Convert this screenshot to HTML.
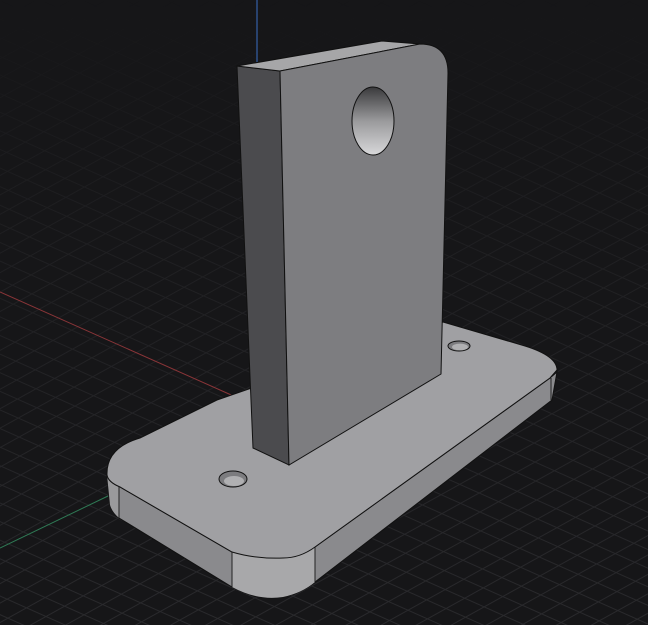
<!DOCTYPE html>
<html><head><style>html,body{margin:0;padding:0;background:#161618;overflow:hidden}svg{display:block}</style></head>
<body>
<svg width="648" height="625" viewBox="0 0 648 625" xmlns="http://www.w3.org/2000/svg">
<defs>
<pattern id="p1" width="40" height="17" patternUnits="userSpaceOnUse" patternTransform="rotate(24)"><line x1="0" y1="0.5" x2="40" y2="0.5" stroke="#2a2a2d" stroke-width="1"/></pattern>
<pattern id="p2" width="40" height="17" patternUnits="userSpaceOnUse" patternTransform="rotate(-29)"><line x1="0" y1="0.5" x2="40" y2="0.5" stroke="#2a2a2d" stroke-width="1"/></pattern>
<linearGradient id="fade" x1="0" y1="0" x2="0" y2="1"><stop offset="0" stop-color="#fff" stop-opacity="0"/><stop offset="0.3" stop-color="#fff" stop-opacity="0.4"/><stop offset="1" stop-color="#fff" stop-opacity="1"/></linearGradient>
<mask id="m"><rect width="648" height="625" fill="url(#fade)"/></mask>
<linearGradient id="hole" x1="0" y1="0" x2="0" y2="1"><stop offset="0" stop-color="#3a3a3c"/><stop offset="0.5" stop-color="#9a9a9c"/><stop offset="1" stop-color="#d8d8da"/></linearGradient>
</defs>
<rect width="648" height="625" fill="#161618"/>
<g mask="url(#m)"><rect width="648" height="625" fill="url(#p1)"/><rect width="648" height="625" fill="url(#p2)"/></g>
<line x1="257" y1="0" x2="257" y2="62" stroke="#3a6fc4" stroke-width="1"/>
<line x1="0" y1="292" x2="238" y2="398" stroke="#8a3538" stroke-width="1"/>
<line x1="0" y1="548" x2="108" y2="496" stroke="#2f7a55" stroke-width="1"/>
<!-- base side -->
<path d="M107,475 L110,505 Q112,512 119,518 L232,587 Q258,601 283,597 Q302,593 315,582 L552,400 L557,372 L550,378 L315,547 Q300,558 283,558 Q255,559 232,552 L120,487 Q108,482 107,475 Z" fill="#8a8a8d" stroke="#111" stroke-width="1"/>
<path d="M107,475 Q108,482 119,487 L119,518 Q112,512 110,505 Z" fill="#9a9a9c"/>
<path d="M232,552 Q258,559 283,558 Q300,558 315,547 L315,582 Q302,593 283,597 Q258,601 232,587 Z" fill="#a8a8aa"/>
<line x1="119" y1="487" x2="119" y2="518" stroke="#222" stroke-width="1"/>
<line x1="232" y1="552" x2="232" y2="587" stroke="#222" stroke-width="1"/>
<line x1="315" y1="547" x2="315" y2="582" stroke="#222" stroke-width="1"/>
<line x1="551" y1="378" x2="551" y2="400" stroke="#222" stroke-width="1"/>
<!-- base top -->
<path d="M107,475 Q106,448 140,438 L217,400 L443,322 L525,346 Q557,356 557,370 L550,378 L315,547 Q300,558 283,558 Q255,559 232,552 L120,487 Q108,482 107,475 Z" fill="#a0a0a3" stroke="#111" stroke-width="1"/>
<ellipse cx="233" cy="479" rx="14" ry="8" fill="#7c7c7f" stroke="#111"/>
<ellipse cx="234" cy="481" rx="10" ry="5" fill="#b0b0b2"/>
<ellipse cx="459" cy="346" rx="11" ry="5" fill="#7c7c7f" stroke="#111"/>
<ellipse cx="460" cy="347" rx="8" ry="3.4" fill="#b0b0b2"/>
<!-- upright -->
<path d="M237,66 L280,71 L289,465 L253,448 Z" fill="#4b4b4e" stroke="#111" stroke-width="1"/>
<path d="M237,66 L382,41 L420,44 L280,71 Z" fill="#a6a6a8" stroke="#111" stroke-width="1"/>
<path d="M280,71 L420,44 Q448,44 448,73 L441,374 L289,465 Z" fill="#7d7d80" stroke="#111" stroke-width="1"/>
<ellipse cx="373" cy="121" rx="21" ry="34" fill="url(#hole)" stroke="#111" stroke-width="1"/>
</svg>
</body></html>
